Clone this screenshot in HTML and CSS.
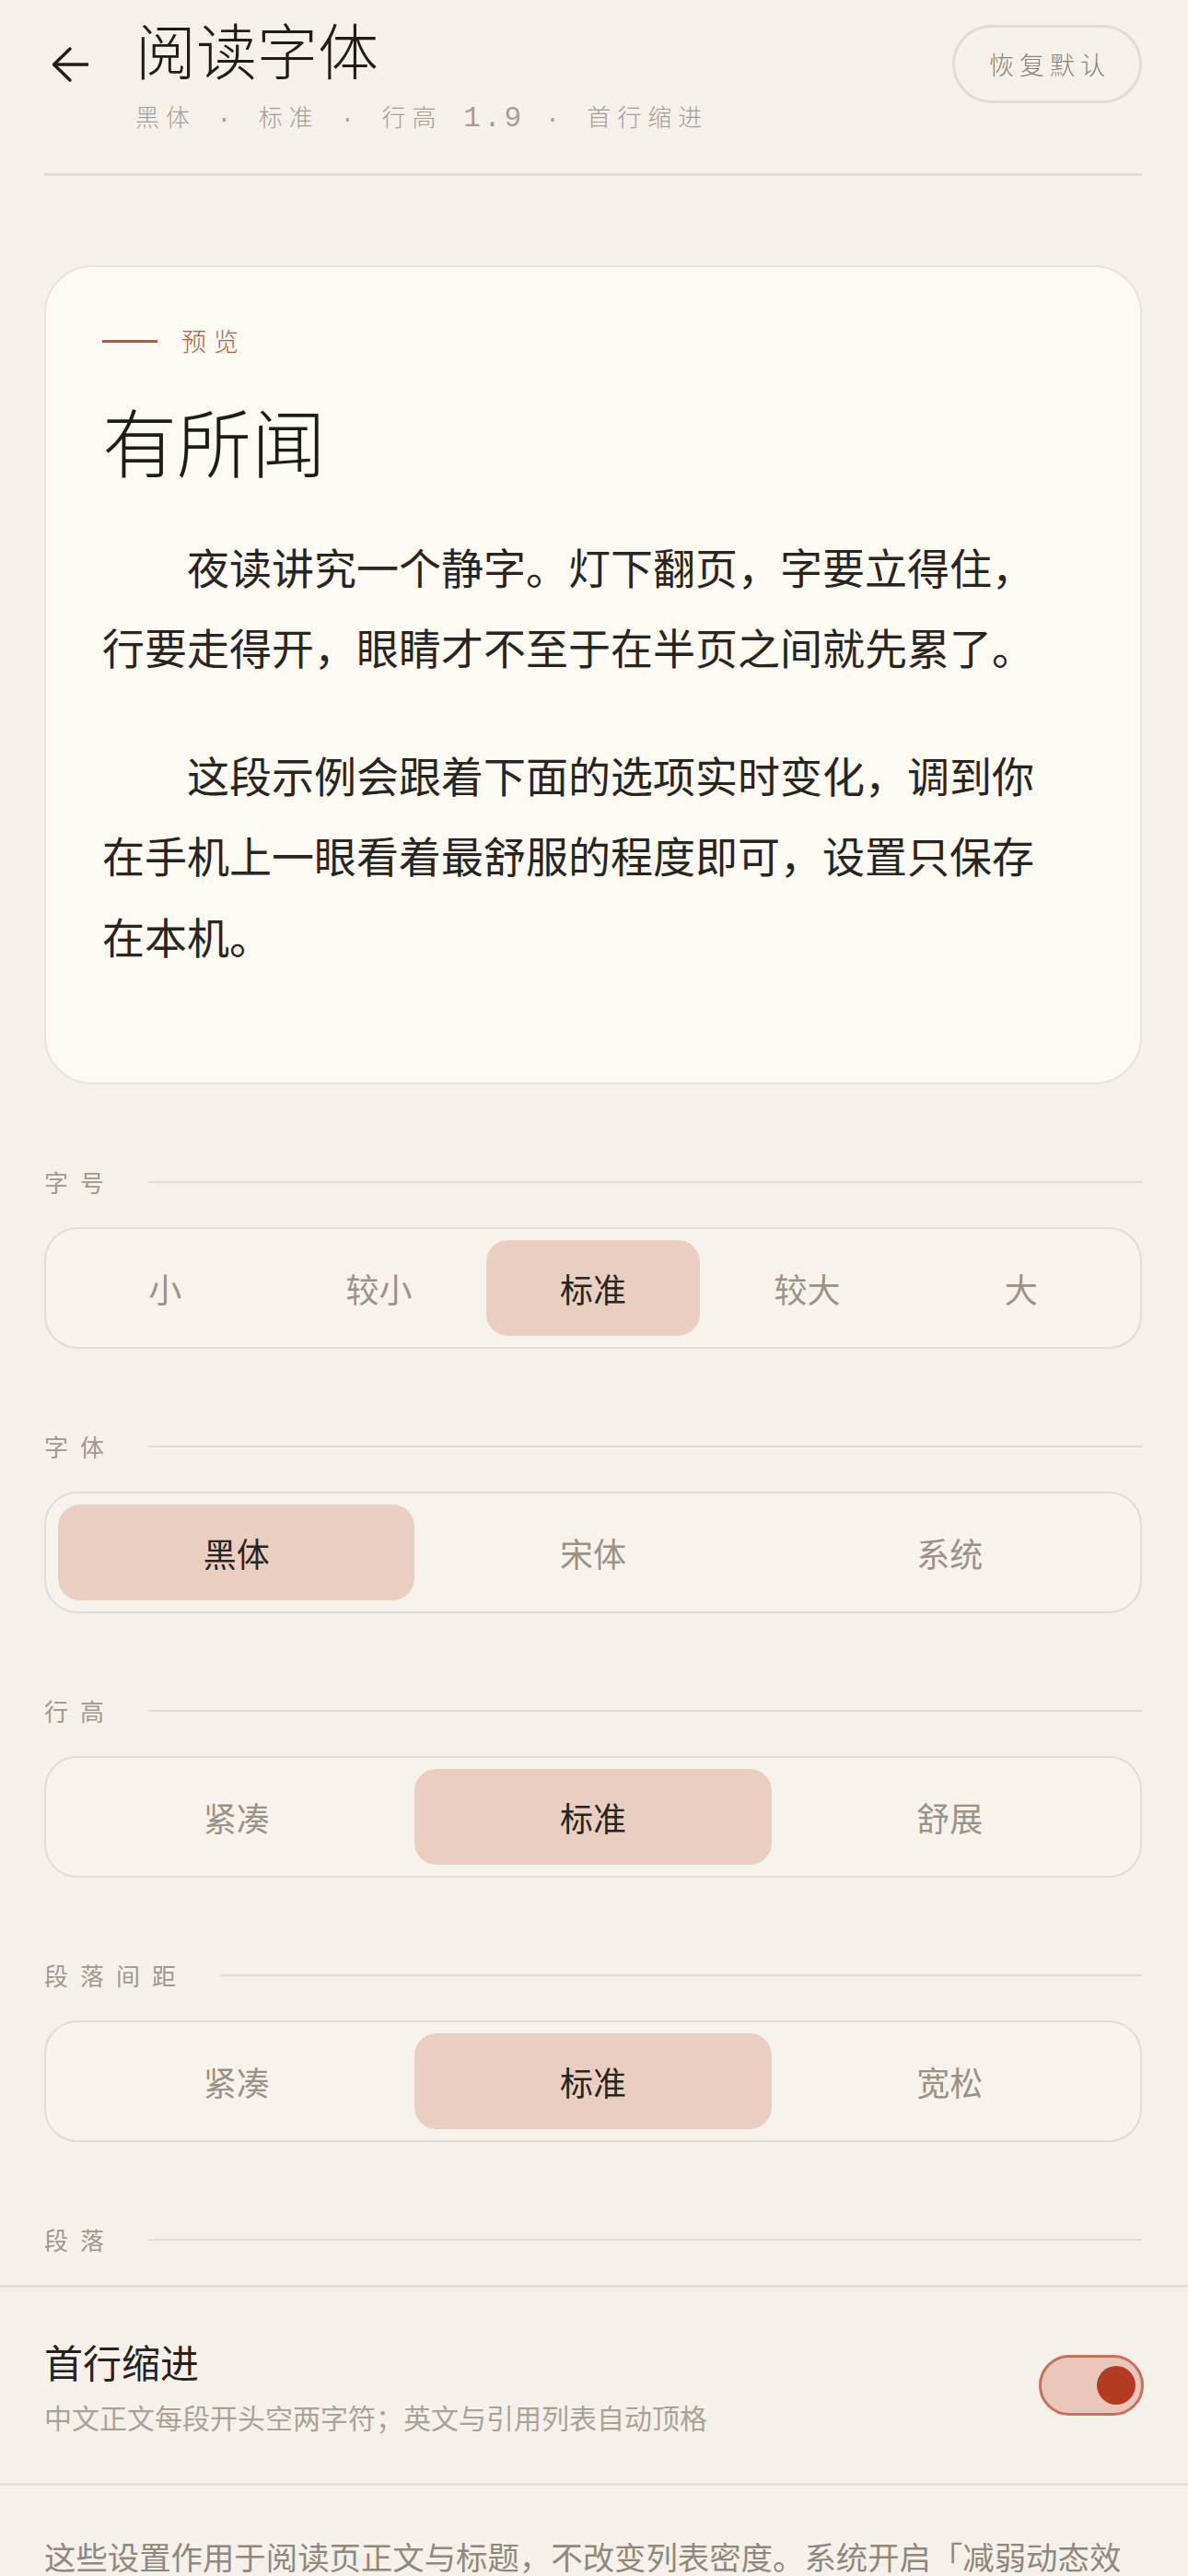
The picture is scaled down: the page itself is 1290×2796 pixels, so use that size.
FILE: index.html
```html
<!DOCTYPE html>
<html lang="zh-CN">
<head>
<meta charset="utf-8">
<title>阅读字体</title>
<link rel="stylesheet" href="styles.css">
</head>
<body>
<div class="page">
  <header class="header">
    <button class="back" aria-label="返回">
      <svg viewBox="0 0 40 40" width="40" height="40" fill="none" stroke="#1f1b17" stroke-width="3.4" stroke-linecap="round" stroke-linejoin="round">
        <path d="M39 20H3"/>
        <path d="M20 3L2.5 20L20 37"/>
      </svg>
    </button>
    <div class="titles">
      <h1 class="title">阅读字体</h1>
      <div class="subtitle">黑体 · 标准 · 行高 <span class="num">1.9</span> · 首行缩进</div>
    </div>
    <button class="reset">恢复默认</button>
  </header>
  <div class="rule"></div>

  <section class="card">
    <div class="eyebrow"><span class="eyebrow-line"></span><span class="eyebrow-text">预览</span></div>
    <h2 class="card-title">有所闻</h2>
    <p class="para first">夜读讲究一个静字。灯下翻页，字要立得住，行要走得开，眼睛才不至于在半页之间就先累了。</p>
    <p class="para">这段示例会跟着下面的选项实时变化，调到你在手机上一眼看着最舒服的程度即可，设置只保存在本机。</p>
  </section>

  <section class="section">
    <div class="sec-label"><span class="sec-text">字号</span><span class="sec-line"></span></div>
    <div class="seg cols5">
      <div class="opt">小</div>
      <div class="opt">较小</div>
      <div class="opt on">标准</div>
      <div class="opt">较大</div>
      <div class="opt">大</div>
    </div>
  </section>

  <section class="section">
    <div class="sec-label"><span class="sec-text">字体</span><span class="sec-line"></span></div>
    <div class="seg cols3">
      <div class="opt on">黑体</div>
      <div class="opt">宋体</div>
      <div class="opt">系统</div>
    </div>
  </section>

  <section class="section">
    <div class="sec-label"><span class="sec-text">行高</span><span class="sec-line"></span></div>
    <div class="seg cols3">
      <div class="opt">紧凑</div>
      <div class="opt on">标准</div>
      <div class="opt">舒展</div>
    </div>
  </section>

  <section class="section">
    <div class="sec-label"><span class="sec-text">段落间距</span><span class="sec-line"></span></div>
    <div class="seg cols3">
      <div class="opt">紧凑</div>
      <div class="opt on">标准</div>
      <div class="opt">宽松</div>
    </div>
  </section>

  <section class="section">
    <div class="sec-label"><span class="sec-text">段落</span><span class="sec-line"></span></div>
    <div class="toggle-row">
      <div class="toggle-text">
        <div class="toggle-title">首行缩进</div>
        <div class="toggle-sub">中文正文每段开头空两字符；英文与引用列表自动顶格</div>
      </div>
      <div class="switch on"><span class="knob"></span></div>
    </div>
  </section>

  <p class="note">这些设置作用于阅读页正文与标题，不改变列表密度。系统开启「减弱动态效果」后，切换选项时不再播放过渡动画。</p>
</div>
</body>
</html>
```

FILE: styles.css
```css
html, body {
  margin: 0;
  padding: 0;
  background: #f5f1ea;
}

body {
  font-family: "Noto Sans CJK SC", "Noto Sans", sans-serif;
  color: #26211d;
}

.page {
  padding: 0 50px 0 48px;
}

/* Header */
.header {
  display: flex;
  align-items: flex-start;
  padding-top: 12px;
}

.back {
  margin: 38px 0 0 8px;
  width: 40px;
  height: 40px;
  padding: 0;
  border: 0;
  background: transparent;
  display: flex;
}

.back svg {
  display: block;
}

.titles {
  margin-left: 51px;
  flex: 1;
}

.title {
  margin: 0;
  font-size: 66px;
  line-height: 80px;
  font-weight: 300;
  color: #1f1b17;
}

.subtitle {
  margin-top: 20px;
  font-family: "Liberation Mono", "Noto Sans CJK SC", monospace;
  font-size: 26px;
  line-height: 36px;
  letter-spacing: 7px;
  color: #a59d92;
  font-weight: 300;
  white-space: nowrap;
}

.subtitle .num {
  font-size: 31px;
  letter-spacing: 3.5px;
  line-height: 1;
}

.reset {
  margin-top: 15px;
  height: 85px;
  box-sizing: border-box;
  border: 3px solid #e0dbd3;
  border-radius: 43px;
  background: transparent;
  padding: 0 31px 0 37px;
  font-family: "Noto Sans CJK SC", sans-serif;
  font-weight: 300;
  font-size: 27px;
  letter-spacing: 6px;
  color: #8b8379;
}

.rule {
  margin-top: 40px;
  height: 3px;
  background: #e3ded7;
}

/* Preview card */
.card {
  margin-top: 97px;
  border: 2px solid #e8e3da;
  border-radius: 52px;
  background: #fcfaf3;
  padding: 62px 90px 65px 61px;
}

.eyebrow {
  display: flex;
  align-items: center;
  gap: 26px;
  height: 36px;
}

.eyebrow-line {
  width: 60px;
  height: 3px;
  background: #b6553e;
}

.eyebrow-text {
  font-size: 27px;
  line-height: 36px;
  letter-spacing: 8px;
  color: #b55a43;
  font-weight: 300;
}

.card-title {
  margin: 38px 0 0;
  font-size: 81px;
  line-height: 101px;
  font-weight: 300;
  color: #1f1b17;
}

.para {
  margin: 0 0 51px;
  font-size: 46px;
  line-height: 1.9;
  text-indent: 2em;
  color: #29241f;
}

.para.first {
  margin-top: 44px;
}

/* Sections */
.section {
  margin-top: 88px;
}

.sec-label {
  display: flex;
  align-items: center;
  gap: 35px;
  height: 36px;
}

.sec-text {
  font-size: 26px;
  line-height: 36px;
  letter-spacing: 13px;
  color: #a0988d;
  font-weight: 400;
  white-space: nowrap;
}

.sec-line {
  flex: 1;
  height: 2px;
  background: #e1dcd4;
}

.seg {
  margin-top: 31px;
  display: grid;
  border: 2px solid #e1dcd5;
  border-radius: 36px;
  padding: 12px 13px;
  background: #f7f3ec;
}

.seg.cols5 {
  grid-template-columns: repeat(5, 1fr);
}

.seg.cols3 {
  grid-template-columns: repeat(3, 1fr);
}

.opt {
  height: 104px;
  display: flex;
  align-items: center;
  justify-content: center;
  font-size: 36px;
  color: #9a9287;
  border-radius: 24px;
}

.opt.on {
  background: #eacec1;
  color: #2a2420;
}

/* Toggle row */
.toggle-row {
  margin: 31px -50px 0 -48px;
  padding: 51px 48px;
  border-top: 3px solid #e4dfd8;
  border-bottom: 3px solid #e4dfd8;
  display: flex;
  align-items: center;
  justify-content: space-between;
}

.toggle-title {
  font-size: 42px;
  line-height: 58px;
  color: #26211d;
}

.toggle-sub {
  margin-top: 10px;
  font-size: 30px;
  line-height: 42px;
  color: #aaa297;
}

.switch {
  width: 114px;
  height: 66px;
  box-sizing: border-box;
  border: 3px solid #c8705c;
  border-radius: 33px;
  background: #e9c7bb;
  display: flex;
  align-items: center;
  justify-content: flex-end;
  padding-right: 6px;
}

.knob {
  width: 42px;
  height: 42px;
  border-radius: 50%;
  background: #b53a22;
}

.note {
  margin: 47px 0 0;
  font-size: 34.4px;
  line-height: 1.7;
  color: #90887d;
}
```
